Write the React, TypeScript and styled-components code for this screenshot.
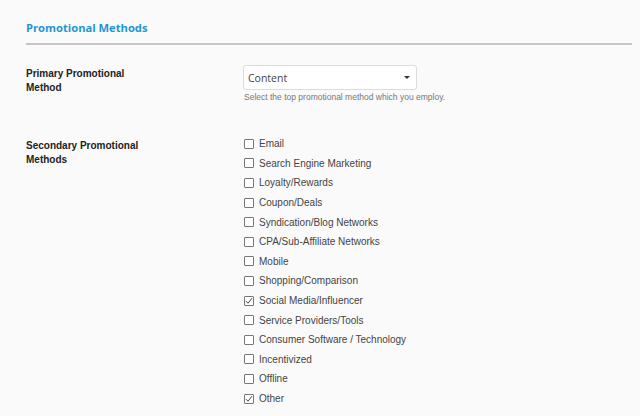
import * as React from "react";
import styled, { createGlobalStyle } from "styled-components";

const GlobalStyle = createGlobalStyle`
  html, body {
    margin: 0;
    padding: 0;
    background: #fafafa;
  }
`;

const Page = styled.div`
  padding: 20px 8px 0 26px;
  font-family: "Liberation Sans", Arial, sans-serif;
`;

const SectionHeader = styled.h2`
  margin: 0;
  padding-bottom: 7px;
  border-bottom: 2px solid #c6c6c6;
  font-family: "Open Sans", sans-serif;
  font-size: 11.2px;
  font-weight: 700;
  color: #1e96d6;
  line-height: 16px;
`;

const FieldRow = styled.div<{ $top: number }>`
  display: grid;
  grid-template-columns: 217px 1fr;
  margin-top: ${(p) => p.$top}px;
`;

const FieldLabel = styled.div<{ $offset: number }>`
  font-size: 10px;
  font-weight: 700;
  color: #222;
  line-height: 13.5px;
  width: 125px;
  padding-top: ${(p) => p.$offset}px;
`;

const SelectBox = styled.div`
  width: 174px;
  height: 25px;
  box-sizing: border-box;
  border: 1px solid #dcdcdc;
  border-radius: 3px;
  background: #fff;
  display: flex;
  align-items: center;
  justify-content: space-between;
  padding: 0 6px 0 4px;
  font-family: "Open Sans", sans-serif;
  font-size: 10.5px;
  color: #444;
`;

const Caret = styled.span`
  width: 0;
  height: 0;
  border-left: 3px solid transparent;
  border-right: 3px solid transparent;
  border-top: 3px solid #333;
`;

const HelpText = styled.div`
  margin-top: 2px;
  font-size: 8.5px;
  color: #777;
  padding-left: 1px;
`;

const CheckList = styled.ul`
  list-style: none;
  margin: 0;
  padding: 2px 0 0;
  display: flex;
  flex-direction: column;
`;

const CheckItem = styled.li`
  display: flex;
  align-items: center;
  gap: 5px;
  height: 19.6px;
  font-size: 10px;
  color: #444;
  padding-left: 1px;
`;

const Box = styled.span<{ $checked: boolean }>`
  width: 8px;
  height: 8px;
  border: 1px solid #777;
  border-radius: 1px;
  background: #fff;
  display: flex;
  align-items: center;
  justify-content: center;
`;

const methods: Array<[string, boolean]> = [
  ["Email", false],
  ["Search Engine Marketing", false],
  ["Loyalty/Rewards", false],
  ["Coupon/Deals", false],
  ["Syndication/Blog Networks", false],
  ["CPA/Sub-Affiliate Networks", false],
  ["Mobile", false],
  ["Shopping/Comparison", false],
  ["Social Media/Influencer", true],
  ["Service Providers/Tools", false],
  ["Consumer Software / Technology", false],
  ["Incentivized", false],
  ["Offline", false],
  ["Other", true],
];

const App: React.FC = () => {
  return (
    <Page>
      <GlobalStyle />
      <SectionHeader>Promotional Methods</SectionHeader>

      <FieldRow $top={20}>
        <FieldLabel $offset={2}>Primary Promotional Method</FieldLabel>
        <div>
          <SelectBox>
            <span>Content</span>
            <Caret />
          </SelectBox>
          <HelpText>Select the top promotional method which you employ.</HelpText>
        </div>
      </FieldRow>

      <FieldRow $top={30}>
        <FieldLabel $offset={7}>Secondary Promotional Methods</FieldLabel>
        <CheckList>
          {methods.map(([name, checked]) => (
            <CheckItem key={name}>
              <Box $checked={checked}>
                {checked && (
                  <svg width="8" height="8" viewBox="0 0 8 8">
                    <path d="M1 4.2 L3 6.2 L7 1.2" fill="none" stroke="#444" strokeWidth="1" />
                  </svg>
                )}
              </Box>
              {name}
            </CheckItem>
          ))}
        </CheckList>
      </FieldRow>
    </Page>
  );
};

export default App;
